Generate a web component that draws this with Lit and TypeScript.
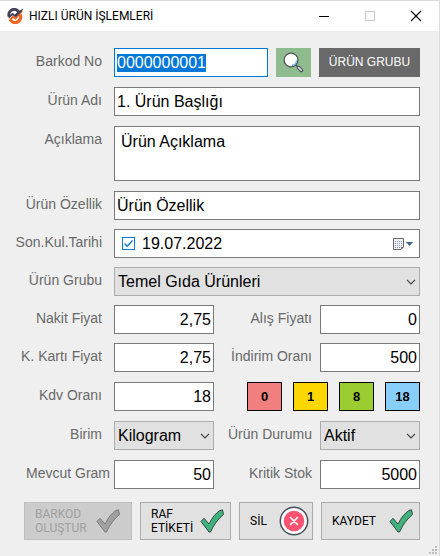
import { LitElement, html, css } from "lit";
import { customElement, state, query } from "lit/decorators.js";

const tick = (fill: string, line: string) => html`
  <svg class="tick" viewBox="0 0 24 24" aria-hidden="true">
    <path d="M1 12.500 L4 9.300 L9 15 Q14 5 20 1.500 L22.500 0.800 L23.500 5.500 Q15.500 12 10.500 23 L9 23 Z"
      fill=${fill} stroke=${line} stroke-width="1" stroke-linejoin="round"/>
  </svg>`;

const chevron = html`
  <svg class="chevron" viewBox="0 0 10 6" aria-hidden="true">
    <path d="M1 0.800 L5 4.800 L9 0.800" fill="none" stroke="#444" stroke-width="1.2"/>
  </svg>`;

@customElement("app-root")
export class AppRoot extends LitElement {
  @state() private taxRate = "18";
  @query("#barcode") private barcode!: HTMLInputElement;

  private rates = [
    { value: "0", tone: "red" },
    { value: "1", tone: "gold" },
    { value: "8", tone: "green" },
    { value: "18", tone: "blue" },
  ];

  static styles = css`
    :host {
      display: block;
      min-height: 100vh;
      box-sizing: border-box;
      background: #efefef;
      border-top: 1px solid #dcdcdc;
      border-right: 1px solid #dcdcdc;
      font-family: "Liberation Sans", Arial, sans-serif;
      font-size: 16px;
      line-height: 21px;
      color: #000;
      position: relative;
    }
    * { box-sizing: border-box; }
    button, input, select, textarea {
      font: inherit;
      color: inherit;
      margin: 0;
      border-radius: 0;
      outline: none;
    }
    button { cursor: pointer; }
    .titlebar {
      display: flex;
      align-items: center;
      height: 30px;
      padding-left: 7px;
      background: #fff;
    }
    .logo { width: 17px; height: 16px; }
    .title {
      flex: 1;
      margin: 0;
      padding-left: 5px;
      font: 400 12px/16px Roboto, "Open Sans", sans-serif;
    }
    .caption {
      display: flex;
      align-items: center;
      justify-content: center;
      width: 46px;
      height: 30px;
      padding: 0;
      border: 0;
      background: none;
    }
    .caption svg { width: 12px; height: 12px; }
    form { padding: 17px 19px 15px 0; }
    .section { display: grid; gap: 10px; margin-bottom: 10px; }
    .section.dense { gap: 9px; }
    .row { display: grid; grid-template-columns: 114px 1fr; }
    .row.pair { grid-template-columns: 114px 1fr 106px 1fr; }
    .label {
      padding: 3px 12px 0 0;
      font-size: 14px;
      line-height: 20px;
      text-align: right;
      white-space: nowrap;
      color: #696969;
    }
    .label.second { padding-right: 8px; }
    .label.near { padding-right: 4px; }
    .field {
      display: block;
      width: 100%;
      min-width: 0;
      height: 29px;
      padding: 0 2px;
      border: 1px solid #7a7a7a;
      background: #fff;
    }
    .field.number { text-align: right; }
    .field.active { border-color: #0078d7; }
    .field::selection { background: #0078d7; color: #fff; }
    .field.area { height: 55px; padding: 4px 6px; resize: none; overflow: hidden; }
    .barcode { display: grid; grid-template-columns: 1fr 35px 101px; gap: 8px; }
    .search, .group {
      display: flex;
      align-items: center;
      justify-content: center;
      padding: 0;
      border: 0;
      background: #8fbc8f;
    }
    .search svg { width: 21px; height: 21px; }
    .group { background: #696969; color: #fff; font-size: 12px; white-space: nowrap; }
    .date {
      display: flex;
      align-items: center;
      height: 29px;
      padding: 0 5px 0 7px;
      border: 1px solid #7a7a7a;
      background: #fff;
    }
    .check { display: grid; width: 13px; height: 13px; }
    .check input, .check svg { grid-area: 1 / 1; width: 13px; height: 13px; }
    .check input { appearance: none; border: 1px solid #0078d7; background: #fff; }
    .check svg { pointer-events: none; visibility: hidden; }
    .check input:checked + svg { visibility: visible; }
    .date-text { flex: 1; min-width: 0; padding: 0 7px; border: 0; background: none; }
    .calendar { display: flex; padding: 0; border: 0; background: none; }
    .calendar svg { width: 22px; height: 14px; }
    .select { display: grid; align-items: center; min-width: 0; }
    .select select {
      grid-area: 1 / 1;
      appearance: none;
      width: 100%;
      height: 29px;
      padding: 0 16px 0 3px;
      border: 1px solid #acacac;
      background: #e1e1e1;
    }
    .chevron {
      grid-area: 1 / 1;
      justify-self: end;
      width: 10px;
      height: 6px;
      margin-right: 4px;
      pointer-events: none;
    }
    .rates { grid-column: 3 / -1; justify-self: end; display: flex; gap: 11px; }
    .rate {
      width: 35px;
      height: 29px;
      padding: 0;
      border: 1px solid #000;
      font-size: 13px;
      font-weight: 700;
    }
    .red { background: #f08080; }
    .gold { background: #ffd700; }
    .green { background: #9acd32; }
    .blue { background: #87cefa; }
    .actions {
      display: grid;
      grid-template-columns: 108fr 91fr 74fr 99fr;
      gap: 8px;
      padding: 3px 0 0 24px;
    }
    .action {
      display: flex;
      align-items: center;
      justify-content: space-between;
      height: 38px;
      padding: 0 6px 0 10px;
      border: 1px solid #acacac;
      background: #e1e1e1;
      font: 400 12px/14px Roboto, "Open Sans", sans-serif;
      text-align: left;
    }
    .action.roomy { padding-right: 11px; }
    .action.round { padding-right: 3px; }
    .action:disabled { border-color: #bfbfbf; background: #ccc; color: #a0a0a0; cursor: default; }
    .tick { width: 24px; height: 24px; flex: none; }
    .cross { width: 30px; height: 30px; flex: none; }
    .grip { position: absolute; right: 1px; bottom: 1px; width: 9px; height: 9px; }
  `;

  firstUpdated() {
    this.barcode.focus();
    this.barcode.select();
  }

  private number(id: string, label: string, value: string, kind = "") {
    return html`
      <label class="label ${kind}" for=${id}>${label}</label>
      <input class="field number" id=${id} inputmode="decimal" .value=${value}>`;
  }

  private choice(id: string, label: string, value: string, kind = "") {
    return html`
      <label class="label ${kind}" for=${id}>${label}</label>
      <div class="select">
        <select id=${id}><option>${value}</option></select>
        ${chevron}
      </div>`;
  }

  render() {
    return html`
      <header class="titlebar">
        <svg class="logo" viewBox="0 0 17 16" aria-hidden="true">
          <path d="M2.200 8.500 A5.300 5.300 0 0 1 11.500 3.600" fill="none" stroke="#45425c" stroke-width="3"/>
          <path d="M13 6.500 A5.300 5.300 0 0 1 3.200 11.500" fill="none" stroke="#f26522" stroke-width="3.400"/>
          <path d="M1.500 9.500 L5.500 6 L8 8 L12 4.200" fill="none" stroke="#45425c" stroke-width="1.800"/>
          <path d="M3 11.500 L6 8.800 L8.500 10.500 L15 2.500" fill="none" stroke="#f26522" stroke-width="2"/>
          <path d="M11 3.500 L16.500 0.500 L14.500 4 L9 9 L7 7.500 Z" fill="#45425c"/>
        </svg>
        <h1 class="title">HIZLI ÜRÜN İŞLEMLERİ</h1>
        <button class="caption" aria-label="Simge durumuna küçült">
          <svg viewBox="0 0 12 12"><path d="M1 6.500 H11" stroke="#000"/></svg>
        </button>
        <button class="caption" aria-label="Ekranı kapla" disabled>
          <svg viewBox="0 0 12 12"><rect x="1.500" y="1.500" width="9" height="9" fill="none" stroke="#ccc"/></svg>
        </button>
        <button class="caption" aria-label="Kapat">
          <svg viewBox="0 0 12 12"><path d="M1 1 L11 11 M11 1 L1 11" stroke="#000" stroke-width="1.100"/></svg>
        </button>
      </header>

      <form @submit=${(e: Event) => e.preventDefault()}>
        <div class="section">
          <div class="row">
            <label class="label" for="barcode">Barkod No</label>
            <div class="barcode">
              <input class="field active" id="barcode" .value=${"0000000001"}>
              <button class="search" type="button" aria-label="Ara">
                <svg viewBox="0 0 21 21">
                  <circle cx="8" cy="8" r="6.900" fill="#fff" stroke="#4b5058" stroke-width="1.300"/>
                  <path d="M9 13.500 A5.600 5.600 0 0 0 13.500 8.500" fill="none" stroke="#6db9f5" stroke-width="1.300"/>
                  <path d="M12.900 12.900 L15 15" stroke="#4b5058" stroke-width="1.400"/>
                  <path d="M15.500 15.500 L18.300 18.300" stroke="#4b5058" stroke-width="3.800" stroke-linecap="round"/>
                  <path d="M15.600 15.600 L18.200 18.200" stroke="#d5dadd" stroke-width="1.700" stroke-linecap="round"/>
                </svg>
              </button>
              <button class="group" type="button">ÜRÜN GRUBU</button>
            </div>
          </div>
          <div class="row">
            <label class="label" for="name">Ürün Adı</label>
            <input class="field" id="name" .value=${"1. Ürün Başlığı"}>
          </div>
          <div class="row">
            <label class="label" for="about">Açıklama</label>
            <textarea class="field area" id="about" .value=${"Ürün Açıklama"}></textarea>
          </div>
        </div>

        <div class="section dense">
          <div class="row">
            <label class="label" for="feature">Ürün Özellik</label>
            <input class="field" id="feature" .value=${"Ürün Özellik"}>
          </div>
          <div class="row">
            <label class="label" for="expiry">Son.Kul.Tarihi</label>
            <div class="date">
              <span class="check">
                <input type="checkbox" checked aria-label="Son kullanma tarihi var">
                <svg viewBox="0 0 13 13"><path d="M2.500 6.500 L5.200 9.200 L10.500 3.500" fill="none" stroke="#0078d7" stroke-width="1.300"/></svg>
              </span>
              <input class="date-text" id="expiry" .value=${"19.07.2022"}>
              <button class="calendar" type="button" aria-label="Takvimi aç">
                <svg viewBox="0 0 22 14">
                  <path d="M1.500 1.500 H11.500 V10 L9 12.500 H1.500 Z" fill="#eef0f5" stroke="#6d6467"/>
                  <path d="M3 4.500 H10 M3 6.500 H10 M3 8.500 H10 M3 10.500 H8" stroke="#8797b0" stroke-dasharray="1 1"/>
                  <path d="M9 12.500 V10 H11.500 Z" fill="#6d6467"/>
                  <path d="M14 5 H21 L17.500 9 Z" fill="#3c6289"/>
                </svg>
              </button>
            </div>
          </div>
          <div class="row">${this.choice("group", "Ürün Grubu", "Temel Gıda Ürünleri")}</div>
          <div class="row pair">
            ${this.number("cash", "Nakit Fiyat", "2,75")}
            ${this.number("cost", "Alış Fiyatı", "0", "second")}
          </div>
          <div class="row pair">
            ${this.number("card", "K. Kartı Fiyat", "2,75")}
            ${this.number("discount", "İndirim Oranı", "500", "second")}
          </div>
        </div>

        <div class="section">
          <div class="row pair">
            ${this.number("tax", "Kdv Oranı", this.taxRate)}
            <div class="rates">
              ${this.rates.map((r) => html`
                <button class="rate ${r.tone}" type="button" @click=${() => (this.taxRate = r.value)}>${r.value}</button>`)}
            </div>
          </div>
          <div class="row pair">
            ${this.choice("unit", "Birim", "Kilogram")}
            ${this.choice("status", "Ürün Durumu", "Aktif", "second")}
          </div>
          <div class="row pair">
            ${this.number("stock", "Mevcut Gram", "50", "near")}
            ${this.number("critical", "Kritik Stok", "5000", "second")}
          </div>
        </div>

        <div class="actions">
          <button class="action roomy" type="button" disabled><span>BARKOD<br>OLUŞTUR</span>${tick("#a0a0a0", "#7c7c7c")}</button>
          <button class="action" type="button"><span>RAF<br>ETİKETİ</span>${tick("#3cb47c", "#3d4347")}</button>
          <button class="action round" type="button">
            <span>SİL</span>
            <svg class="cross" viewBox="0 0 30 30" aria-hidden="true">
              <circle cx="15" cy="15" r="13.700" fill="#fff" stroke="#4b5260" stroke-width="1.500"/>
              <circle cx="15" cy="15" r="10.300" fill="#ff5373"/>
              <path d="M11.500 11.500 L18.500 18.500 M18.500 11.500 L11.500 18.500" stroke="#fff" stroke-width="1.600" stroke-linecap="round"/>
            </svg>
          </button>
          <button class="action" type="submit"><span>KAYDET</span>${tick("#3cb47c", "#3d4347")}</button>
        </div>
      </form>

      <svg class="grip" viewBox="0 0 9 9" aria-hidden="true">
        <path d="M6 0h2v2h-2z M3 3h2v2h-2z M6 3h2v2h-2z M0 6h2v2h-2z M3 6h2v2h-2z M6 6h2v2h-2z" fill="#bfbfbf"/>
      </svg>
    `;
  }
}
